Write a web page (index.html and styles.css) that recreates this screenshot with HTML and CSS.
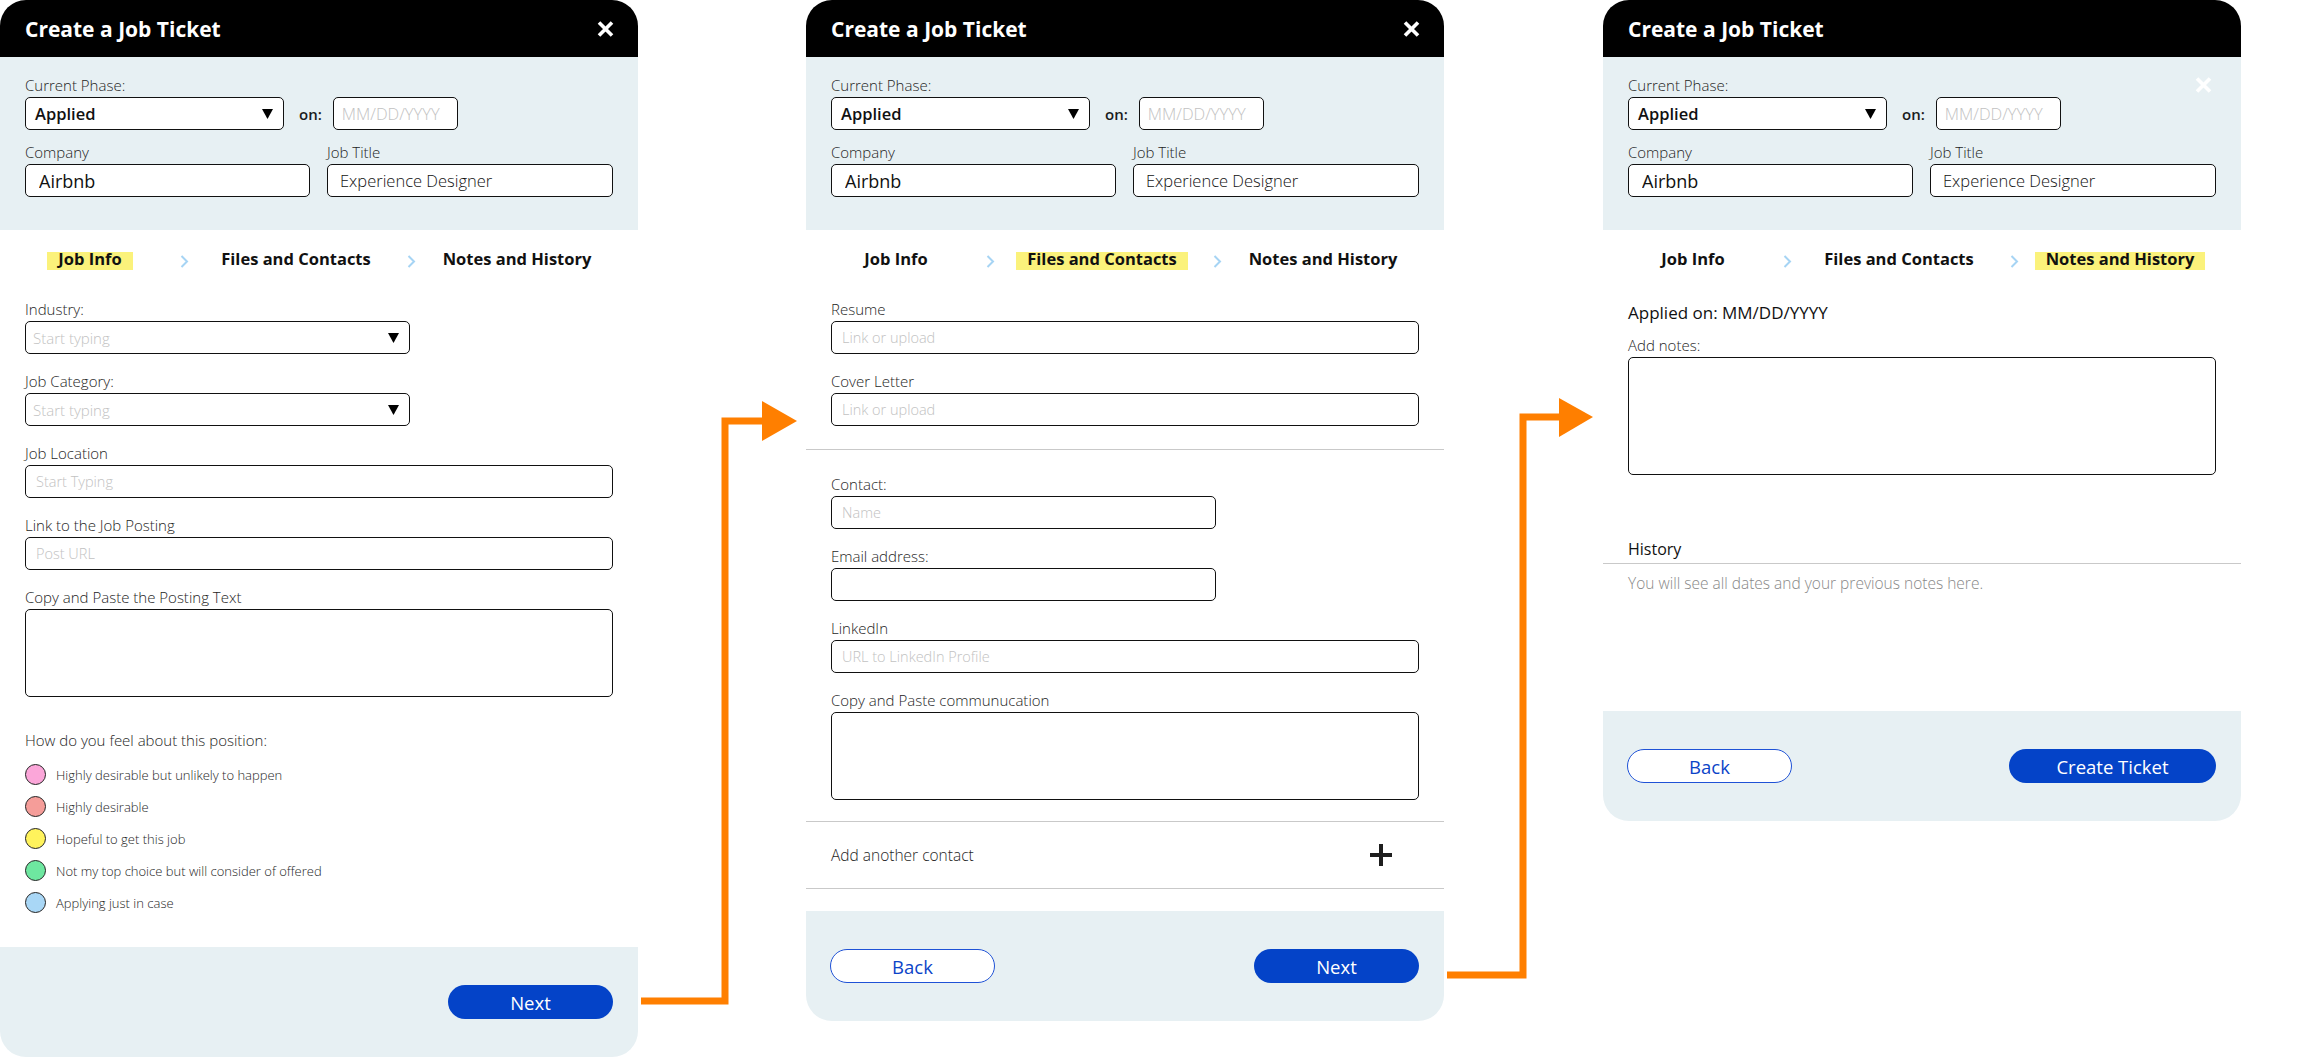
FILE: index.html
```html
<!DOCTYPE html>
<html lang="en">
<head>
    <meta charset="UTF-8">
    <meta name="viewport" content="width=device-width, initial-scale=1.0">
    <title>Create a Job Ticket</title>
    <link rel="stylesheet" href="styles.css">
</head>
<body>
<div class="board">

    <!-- Step 1: job info -->
    <section class="ticket ticket-info">
        <header class="ticket-head">
            <h1>Create a Job Ticket</h1>
            <svg class="close" viewBox="0 0 17 16"><path d="M2 1.5l13 13M15 1.5l-13 13"/></svg>
        </header>
        <div class="ticket-top">
            <div class="top-line"><label class="lbl">Current Phase:</label></div>
            <div class="phase-row">
                <div class="select phase">Applied <svg class="caret" viewBox="0 0 11 10"><path d="M0 0h11L5.5 10z"/></svg></div>
                <span class="on">on:</span>
                <input class="input date" placeholder="MM/DD/YYYY">
            </div>
            <div class="pair">
                <div><label class="lbl">Company</label><input class="input company" value="Airbnb"></div>
                <div><label class="lbl">Job Title</label><input class="input role" value="Experience Designer"></div>
            </div>
        </div>
        <nav class="steps">
            <span class="step current">Job Info</span>
            <svg class="chev" viewBox="0 0 9 13"><path d="M1.5 1l5.5 5.5L1.5 12"/></svg>
            <span class="step">Files and Contacts</span>
            <svg class="chev" viewBox="0 0 9 13"><path d="M1.5 1l5.5 5.5L1.5 12"/></svg>
            <span class="step">Notes and History</span>
        </nav>
        <div class="ticket-body">
            <div class="field short">
                <label class="lbl">Industry:</label>
                <div class="select empty">Start typing <svg class="caret" viewBox="0 0 11 10"><path d="M0 0h11L5.5 10z"/></svg></div>
            </div>
            <div class="field short">
                <label class="lbl">Job Category:</label>
                <div class="select empty">Start typing <svg class="caret" viewBox="0 0 11 10"><path d="M0 0h11L5.5 10z"/></svg></div>
            </div>
            <div class="field">
                <label class="lbl">Job Location</label>
                <input class="input" placeholder="Start Typing">
            </div>
            <div class="field">
                <label class="lbl">Link to the Job Posting</label>
                <input class="input" placeholder="Post URL">
            </div>
            <div class="field">
                <label class="lbl">Copy and Paste the Posting Text</label>
                <textarea class="textarea"></textarea>
            </div>
            <p class="feel">How do you feel about this position:</p>
            <ul class="moods">
                <li class="mood"><span class="dot pink"></span>Highly desirable but unlikely to happen</li>
                <li class="mood"><span class="dot salmon"></span>Highly desirable</li>
                <li class="mood"><span class="dot yellow"></span>Hopeful to get this job</li>
                <li class="mood"><span class="dot green"></span>Not my top choice but will consider of offered</li>
                <li class="mood"><span class="dot blue"></span>Applying just in case</li>
            </ul>
        </div>
        <footer class="ticket-foot end">
            <button class="btn btn-primary">Next</button>
        </footer>
    </section>

    <div class="link link-a">
        <svg viewBox="0 0 168 1057" width="168" height="1057">
            <polyline points="3,1001 87,1001 87,421 126,421"/>
            <polygon points="124,401 159,421 124,441"/>
        </svg>
    </div>

    <!-- Step 2: files and contacts -->
    <section class="ticket ticket-files">
        <header class="ticket-head">
            <h1>Create a Job Ticket</h1>
            <svg class="close" viewBox="0 0 17 16"><path d="M2 1.5l13 13M15 1.5l-13 13"/></svg>
        </header>
        <div class="ticket-top">
            <div class="top-line"><label class="lbl">Current Phase:</label></div>
            <div class="phase-row">
                <div class="select phase">Applied <svg class="caret" viewBox="0 0 11 10"><path d="M0 0h11L5.5 10z"/></svg></div>
                <span class="on">on:</span>
                <input class="input date" placeholder="MM/DD/YYYY">
            </div>
            <div class="pair">
                <div><label class="lbl">Company</label><input class="input company" value="Airbnb"></div>
                <div><label class="lbl">Job Title</label><input class="input role" value="Experience Designer"></div>
            </div>
        </div>
        <nav class="steps">
            <span class="step">Job Info</span>
            <svg class="chev" viewBox="0 0 9 13"><path d="M1.5 1l5.5 5.5L1.5 12"/></svg>
            <span class="step current">Files and Contacts</span>
            <svg class="chev" viewBox="0 0 9 13"><path d="M1.5 1l5.5 5.5L1.5 12"/></svg>
            <span class="step">Notes and History</span>
        </nav>
        <div class="ticket-body files">
            <div class="field">
                <label class="lbl">Resume</label>
                <input class="input" placeholder="Link or upload">
            </div>
            <div class="field">
                <label class="lbl">Cover Letter</label>
                <input class="input" placeholder="Link or upload">
            </div>
        </div>
        <div class="rule"></div>
        <div class="ticket-body contacts">
            <div class="field short">
                <label class="lbl">Contact:</label>
                <input class="input" placeholder="Name">
            </div>
            <div class="field short">
                <label class="lbl">Email address:</label>
                <input class="input">
            </div>
            <div class="field">
                <label class="lbl">LinkedIn</label>
                <input class="input" placeholder="URL to LinkedIn Profile">
            </div>
            <div class="field">
                <label class="lbl">Copy and Paste communucation</label>
                <textarea class="textarea"></textarea>
            </div>
        </div>
        <div class="rule"></div>
        <div class="add-row">
            <span>Add another contact</span>
            <svg class="plus" viewBox="0 0 24 24"><path d="M12 1v22M1 12h22"/></svg>
        </div>
        <div class="rule"></div>
        <footer class="ticket-foot">
            <button class="btn btn-ghost">Back</button>
            <button class="btn btn-primary">Next</button>
        </footer>
    </section>

    <div class="link link-b">
        <svg viewBox="0 0 159 1057" width="159" height="1057">
            <polyline points="3,975 79,975 79,417 117,417"/>
            <polygon points="115,398 149,417 115,437"/>
        </svg>
    </div>

    <!-- Step 3: notes and history -->
    <section class="ticket ticket-notes">
        <header class="ticket-head">
            <h1>Create a Job Ticket</h1>
        </header>
        <div class="ticket-top">
            <div class="top-line">
                <label class="lbl">Current Phase:</label>
                <svg class="close close-soft" viewBox="0 0 17 16"><path d="M2 1.5l13 13M15 1.5l-13 13"/></svg>
            </div>
            <div class="phase-row">
                <div class="select phase">Applied <svg class="caret" viewBox="0 0 11 10"><path d="M0 0h11L5.5 10z"/></svg></div>
                <span class="on">on:</span>
                <input class="input date" placeholder="MM/DD/YYYY">
            </div>
            <div class="pair">
                <div><label class="lbl">Company</label><input class="input company" value="Airbnb"></div>
                <div><label class="lbl">Job Title</label><input class="input role" value="Experience Designer"></div>
            </div>
        </div>
        <nav class="steps">
            <span class="step">Job Info</span>
            <svg class="chev" viewBox="0 0 9 13"><path d="M1.5 1l5.5 5.5L1.5 12"/></svg>
            <span class="step">Files and Contacts</span>
            <svg class="chev" viewBox="0 0 9 13"><path d="M1.5 1l5.5 5.5L1.5 12"/></svg>
            <span class="step current">Notes and History</span>
        </nav>
        <div class="ticket-body notes">
            <p class="applied">Applied on: MM/DD/YYYY</p>
            <div class="field">
                <label class="lbl">Add notes:</label>
                <textarea class="textarea tall"></textarea>
            </div>
        </div>
        <h2 class="history">History</h2>
        <div class="rule"></div>
        <p class="hint">You will see all dates and your previous notes here.</p>
        <footer class="ticket-foot">
            <button class="btn btn-ghost">Back</button>
            <button class="btn btn-primary btn-wide">Create Ticket</button>
        </footer>
    </section>

</div>
</body>
</html>
```

FILE: styles.css
```css
* {
    box-sizing: border-box;
}
body {
    margin: 0;
    background: #fff;
    font-family: "Open Sans", "Liberation Sans", sans-serif;
    color: #1b1b1b;
}
.board {
    display: flex;
    align-items: flex-start;
}

/* ticket card */
.ticket {
    flex: none;
    width: 638px;
    display: flex;
    flex-direction: column;
    background: #fff;
    border-radius: 26px;
    overflow: hidden;
}
.ticket-info { height: 1057px; }
.ticket-files { height: 1021px; }
.ticket-notes { height: 821px; }

.ticket-head {
    flex: none;
    height: 57px;
    display: flex;
    align-items: center;
    justify-content: space-between;
    padding: 0 24px 0 25px;
    background: #000;
}
.ticket-head h1 {
    margin: 0;
    font-size: 21px;
    font-weight: 700;
    color: #fff;
}
.close {
    width: 17px;
    height: 16px;
    fill: none;
    stroke: #fff;
    stroke-width: 3.6;
}
.close-soft {
    height: 18px;
    margin-right: 4px;
}

/* top block: phase, company, title */
.ticket-top {
    flex: none;
    background: #e7f0f3;
    padding: 19px 25px 33px;
}
.top-line {
    display: flex;
    align-items: center;
    justify-content: space-between;
    height: 18px;
    margin-bottom: 3px;
}
.lbl {
    display: block;
    margin: 0 0 3px;
    font-size: 15px;
    font-weight: 300;
    line-height: 18px;
    color: #1e1e1e;
}
.top-line .lbl {
    margin: 0;
}
.phase-row {
    display: flex;
    align-items: center;
}
.select {
    display: flex;
    align-items: center;
    justify-content: space-between;
    height: 33px;
    padding: 0 10px 0 8px;
    background: #fff;
    border: 1.5px solid #111;
    border-radius: 5px;
}
.select.phase {
    width: 259px;
    padding-left: 9px;
    font-size: 16.5px;
    font-weight: 600;
    color: #111;
}
.select.empty {
    font-size: 15px;
    font-weight: 300;
    color: #c2c2c2;
    padding-left: 7px;
}
.caret {
    width: 11px;
    height: 10px;
    fill: #000;
}
.on {
    margin: 0 11px 0 15px;
    font-size: 15px;
    font-weight: 600;
}
.input {
    display: block;
    width: 100%;
    height: 33px;
    padding: 0 10px;
    background: #fff;
    border: 1.5px solid #111;
    border-radius: 5px;
    font-family: inherit;
    font-size: 14.5px;
    color: #111;
    outline: none;
}
.input::placeholder {
    color: #c2c2c2;
    font-weight: 300;
}
.input.date {
    width: 125px;
    padding: 0 8px;
    font-size: 16.5px;
}
.input.company {
    padding-left: 13px;
    font-size: 18px;
}
.input.role {
    padding-left: 12px;
    font-size: 16.5px;
    font-weight: 300;
}
.pair {
    display: grid;
    grid-template-columns: 285px 1fr;
    column-gap: 17px;
    margin-top: 13px;
}

/* step tabs */
.steps {
    flex: none;
    display: grid;
    grid-template-columns: 130px 58px 166px 64px 148px;
    justify-items: center;
    align-items: center;
    height: 18px;
    margin: 22px 25px 0;
}
.step {
    padding: 0 11px 4px;
    font-size: 16.5px;
    font-weight: 700;
    line-height: 14px;
    color: #111;
    white-space: nowrap;
}
.step.current {
    background: #fbf27b;
}
.chev {
    width: 9px;
    height: 13px;
    fill: none;
    stroke: #a6d4f4;
    stroke-width: 2;
}

/* form body */
.ticket-body {
    flex: none;
    padding: 30px 25px 0;
}
.ticket-body.files {
    padding-bottom: 5px;
}
.ticket-body.contacts {
    padding: 25px 25px 3px;
}
.ticket-body.notes {
    padding-top: 33px;
}
.field {
    margin-bottom: 18px;
}
.field.short .input,
.field.short .select {
    width: 385px;
}
.textarea {
    display: block;
    width: 100%;
    height: 88px;
    resize: none;
    background: #fff;
    border: 1.5px solid #111;
    border-radius: 5px;
    font-family: inherit;
    outline: none;
}
.textarea.tall {
    height: 118px;
}
.feel {
    margin: 34px 0 15px;
    font-size: 15px;
    font-weight: 300;
    line-height: 18px;
    color: #1e1e1e;
}
.moods {
    list-style: none;
    margin: 0;
    padding: 0;
    display: flex;
    flex-direction: column;
    gap: 11px;
}
.mood {
    display: flex;
    align-items: center;
    height: 21px;
    font-size: 13px;
    font-weight: 300;
    color: #1e1e1e;
}
.dot {
    width: 21px;
    height: 21px;
    margin-right: 10px;
    border: 1.5px solid #222;
    border-radius: 50%;
}
.pink { background: #fba6d9; }
.salmon { background: #f59d99; }
.yellow { background: #fff35c; }
.green { background: #6ee7a0; }
.blue { background: #a9d7f6; }

.rule {
    flex: none;
    height: 1px;
    background: #c9c9c9;
}
.add-row {
    flex: none;
    height: 66px;
    display: flex;
    align-items: center;
    justify-content: space-between;
    padding: 0 51px 0 25px;
    font-size: 15.5px;
    font-weight: 300;
    color: #1e1e1e;
}
.plus {
    width: 24px;
    height: 24px;
    fill: none;
    stroke: #1e1e1e;
    stroke-width: 4;
}

/* notes step */
.applied {
    margin: 0 0 13px;
    font-size: 17px;
    font-weight: 500;
    line-height: 20px;
    color: #111;
}
.history {
    flex: none;
    margin: 46px 0 4px;
    padding: 0 25px;
    font-size: 16px;
    font-weight: 500;
    line-height: 20px;
    color: #111;
}
.hint {
    margin: 10px 0 0;
    padding: 0 25px;
    font-size: 15.5px;
    font-weight: 300;
    line-height: 18px;
    color: #888;
}

/* footer buttons */
.ticket-foot {
    flex: none;
    height: 110px;
    margin-top: auto;
    display: flex;
    align-items: center;
    justify-content: space-between;
    padding: 0 25px 0 24px;
    background: #e7f0f3;
}
.ticket-foot.end {
    justify-content: flex-end;
}
.btn {
    width: 165px;
    height: 34px;
    border-radius: 17px;
    font-family: inherit;
    font-size: 18.5px;
    font-weight: 500;
    cursor: pointer;
}
.btn-primary {
    background: #0443c8;
    border: none;
    color: #fff;
}
.btn-ghost {
    background: #fff;
    border: 1.5px solid #1f52d6;
    color: #0b44c8;
}
.btn-wide {
    width: 207px;
}

/* orange connectors between steps */
.link {
    flex: none;
}
.link svg {
    display: block;
}
.link polyline {
    fill: none;
    stroke: #ff7f00;
    stroke-width: 7;
}
.link polygon {
    fill: #ff7f00;
}
```
